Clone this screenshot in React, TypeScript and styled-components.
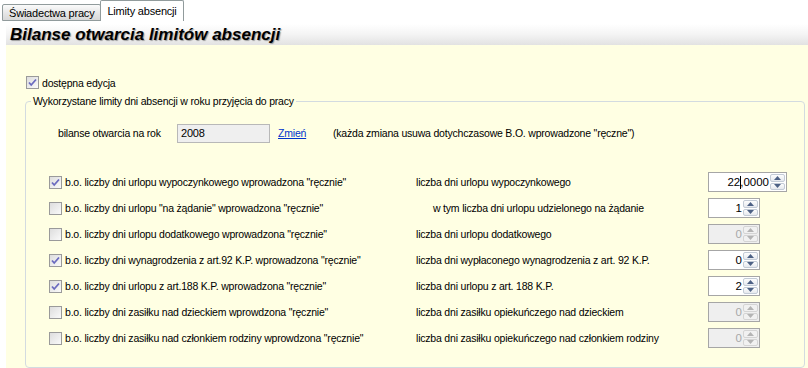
import React, { FC } from "react";
import styled, { createGlobalStyle } from "styled-components";

const GlobalStyle = createGlobalStyle`
  body {
    margin: 0;
    background: #ffffff;
    font-family: "Liberation Sans", Arial, sans-serif;
    font-size: 10.5px;
    letter-spacing: -0.2px;
    color: #000;
  }
`;

const Page = styled.div`
  width: 808px;
  height: 368px;
  display: flex;
  flex-direction: column;
  overflow: hidden;
`;

const TabStrip = styled.div`
  height: 21px;
  display: flex;
  align-items: flex-end;
  padding-left: 2px;
`;

const Tab = styled.div<{ $active?: boolean }>`
  height: ${(p) => (p.$active ? "21px" : "17px")};
  display: flex;
  align-items: center;
  padding: 0 ${(p) => (p.$active ? "6px" : "6px")};
  border: 1px solid #919b9c;
  border-bottom: ${(p) => (p.$active ? "none" : "1px solid #919b9c")};
  background: ${(p) =>
    p.$active ? "#ffffff" : "linear-gradient(#fbfbfb, #e4e4e4 60%, #d8d8d8)"};
  border-radius: 2px 2px 0 0;
  box-sizing: border-box;
  margin-left: ${(p) => (p.$active ? "-1px" : "0")};
  font-size: 11px;
  white-space: nowrap;
`;

const TabPage = styled.div`
  flex: 1;
  display: flex;
  flex-direction: column;
  padding: 3px 0 0 6px;
`;

const Header = styled.div`
  height: 21px;
  display: flex;
  align-items: center;
  padding-left: 4px;
  background: linear-gradient(#ffffff, #f4f4f4 50%, #e2e2e2);
  font-size: 17px;
  font-weight: bold;
  font-style: italic;
  letter-spacing: 0;
  text-shadow: 1px 1px 1px #9a9a9a;
`;

const Content = styled.div`
  flex: 1;
  background: #ffffe3;
  padding: 31px 3px 0 19px;
  display: flex;
  flex-direction: column;
`;

const CheckLine = styled.label`
  display: flex;
  align-items: center;
  gap: 3px;
  height: 13px;
  padding-left: 1px;
`;

const GroupBox = styled.fieldset`
  margin: 6px 0 0 0;
  padding: 15px 0 13px 0;
  border: 1px solid #d3dbe0;
  border-radius: 4px;
  flex: 1;
`;

const Legend = styled.legend`
  margin-left: 5px;
  padding: 0 2px;
  line-height: 13px;
`;

const YearRow = styled.div`
  display: flex;
  align-items: center;
  height: 20px;
  padding-left: 32px;
`;

const YearLabel = styled.span`
  width: 119px;
`;

const YearBox = styled.div`
  width: 93px;
  height: 19px;
  box-sizing: border-box;
  border: 1px solid #b8b8b8;
  background: #efefef;
  padding: 1px 0 0 3px;
  line-height: 15px;
  font-size: 11px;
`;

const Link = styled.span`
  color: #0033cc;
  text-decoration: underline;
  margin-left: 8px;
  width: 55px;
`;

const Rows = styled.div`
  margin-top: 26px;
  display: grid;
  grid-template-columns: 367px 292px auto;
  grid-auto-rows: 26px;
  align-items: center;
  padding-left: 23px;
`;

const LeftCell = styled.div`
  display: flex;
  align-items: center;
  gap: 3px;
  white-space: nowrap;
`;

const RightLabel = styled.div<{ $indent: number }>`
  padding-left: ${(p) => p.$indent}px;
  white-space: nowrap;
`;

const SpinBox = styled.div<{ $width: number; $disabled?: boolean }>`
  width: ${(p) => p.$width}px;
  height: 20px;
  box-sizing: border-box;
  border: 1px solid #a6a6a6;
  background: ${(p) => (p.$disabled ? "#efefef" : "#ffffff")};
  color: ${(p) => (p.$disabled ? "#a8a8a8" : "#000")};
  display: flex;
  align-items: stretch;
  font-size: 11.5px;
  letter-spacing: 0;
`;

const SpinValue = styled.div`
  flex: 1;
  display: flex;
  align-items: center;
  justify-content: flex-end;
  padding-right: 1px;
`;

const Caret = styled.span`
  display: inline-block;
  width: 1px;
  height: 13px;
  margin-right: -1px;
  background: #000;
`;

const SpinButtons = styled.div`
  width: 15px;
  display: flex;
  flex-direction: column;
  padding: 1px 1px 1px 0;
  gap: 1px;
`;

const SpinButton = styled.div<{ $disabled?: boolean }>`
  flex: 1;
  border: 1px solid ${(p) => (p.$disabled ? "#d4d4d4" : "#c3cbd6")};
  border-radius: 2px;
  background: ${(p) =>
    p.$disabled ? "#f1f1f1" : "linear-gradient(#fdfdfd, #e6e9ee)"};
  display: flex;
  align-items: center;
  justify-content: center;
`;

const CheckBox: FC<{ checked?: boolean }> = ({ checked }) => (
  <svg width="13" height="13" viewBox="0 0 13 13">
    <defs>
      <linearGradient id="cbg" x1="0" y1="0" x2="1" y2="1">
        <stop offset="0" stopColor="#dcdcdc" />
        <stop offset="1" stopColor="#fbfbfb" />
      </linearGradient>
    </defs>
    <rect x="0.5" y="0.5" width="12" height="12" fill="url(#cbg)" stroke="#9a9a9a" />
    {checked && (
      <path d="M3 6.5 L5.2 9 L10 3.5" fill="none" stroke="#6a6abf" strokeWidth="1.8" />
    )}
  </svg>
);

const Arrow: FC<{ up?: boolean; disabled?: boolean }> = ({ up, disabled }) => (
  <svg width="7" height="4" viewBox="0 0 7 4">
    <path
      d={up ? "M0 4 L3.5 0 L7 4 Z" : "M0 0 L3.5 4 L7 0 Z"}
      fill={disabled ? "#b4b4b4" : "#4d6185"}
    />
  </svg>
);

const Spinner: FC<{ value: string; width: number; disabled?: boolean }> = ({
  value,
  width,
  disabled,
}) => {
  const caretAt = value.indexOf(",");
  return (
    <SpinBox $width={width} $disabled={disabled}>
      <SpinValue>
        {caretAt > 0 ? (
          <>
            {value.slice(0, caretAt)}
            <Caret />
            {value.slice(caretAt)}
          </>
        ) : (
          value
        )}
      </SpinValue>
      <SpinButtons>
        <SpinButton $disabled={disabled}>
          <Arrow up disabled={disabled} />
        </SpinButton>
        <SpinButton $disabled={disabled}>
          <Arrow disabled={disabled} />
        </SpinButton>
      </SpinButtons>
    </SpinBox>
  );
};

const rows = [
  {
    left: 'b.o. liczby dni urlopu wypoczynkowego wprowadzona "ręcznie"',
    right: "liczba dni urlopu wypoczynkowego",
    checked: true,
    indent: 0,
    value: "22,0000",
    width: 79,
  },
  {
    left: 'b.o. liczby dni urlopu "na żądanie" wprowadzona "ręcznie"',
    right: "w tym liczba dni urlopu udzielonego na żądanie",
    indent: 17,
    value: "1",
    width: 52,
  },
  {
    left: 'b.o. liczby dni urlopu dodatkowego wprowadzona "ręcznie"',
    right: "liczba dni urlopu dodatkowego",
    indent: 0,
    value: "0",
    width: 52,
    disabled: true,
  },
  {
    left: 'b.o. liczby dni wynagrodzenia z art.92 K.P. wprowadzona "ręcznie"',
    right: "liczba dni wypłaconego wynagrodzenia z art. 92 K.P.",
    checked: true,
    indent: 0,
    value: "0",
    width: 52,
  },
  {
    left: 'b.o. liczby dni urlopu z art.188 K.P. wprowadzona "ręcznie"',
    right: "liczba dni urlopu z art. 188 K.P.",
    checked: true,
    indent: 0,
    value: "2",
    width: 52,
  },
  {
    left: 'b.o. liczby dni zasiłku nad dzieckiem wprowdzona "ręcznie"',
    right: "liczba dni zasiłku opiekuńczego nad dzieckiem",
    indent: -1,
    value: "0",
    width: 52,
    disabled: true,
  },
  {
    left: 'b.o. liczby dni zasiłku nad członkiem rodziny wprowdzona "ręcznie"',
    right: "liczba dni zasiłku opiekuńczego nad członkiem rodziny",
    indent: -2,
    value: "0",
    width: 52,
    disabled: true,
  },
];

export default function App() {
  return (
    <Page>
      <GlobalStyle />
      <TabStrip>
        <Tab>Świadectwa pracy</Tab>
        <Tab $active>Limity absencji</Tab>
      </TabStrip>
      <TabPage>
        <Header>Bilanse otwarcia limitów absencji</Header>
        <Content>
          <CheckLine>
            <CheckBox checked />
            dostępna edycja
          </CheckLine>
          <GroupBox>
            <Legend>Wykorzystane limity dni absencji w roku przyjęcia do pracy</Legend>
            <YearRow>
              <YearLabel>bilanse otwarcia na rok</YearLabel>
              <YearBox>2008</YearBox>
              <Link>Zmień</Link>
              <span>(każda zmiana usuwa dotychczasowe B.O. wprowadzone "ręczne")</span>
            </YearRow>
            <Rows>
              {rows.map((r) => (
                <React.Fragment key={r.left}>
                  <LeftCell>
                    <CheckBox checked={r.checked} />
                    {r.left}
                  </LeftCell>
                  <RightLabel $indent={r.indent}>{r.right}</RightLabel>
                  <Spinner value={r.value} width={r.width} disabled={r.disabled} />
                </React.Fragment>
              ))}
            </Rows>
          </GroupBox>
        </Content>
      </TabPage>
    </Page>
  );
}
